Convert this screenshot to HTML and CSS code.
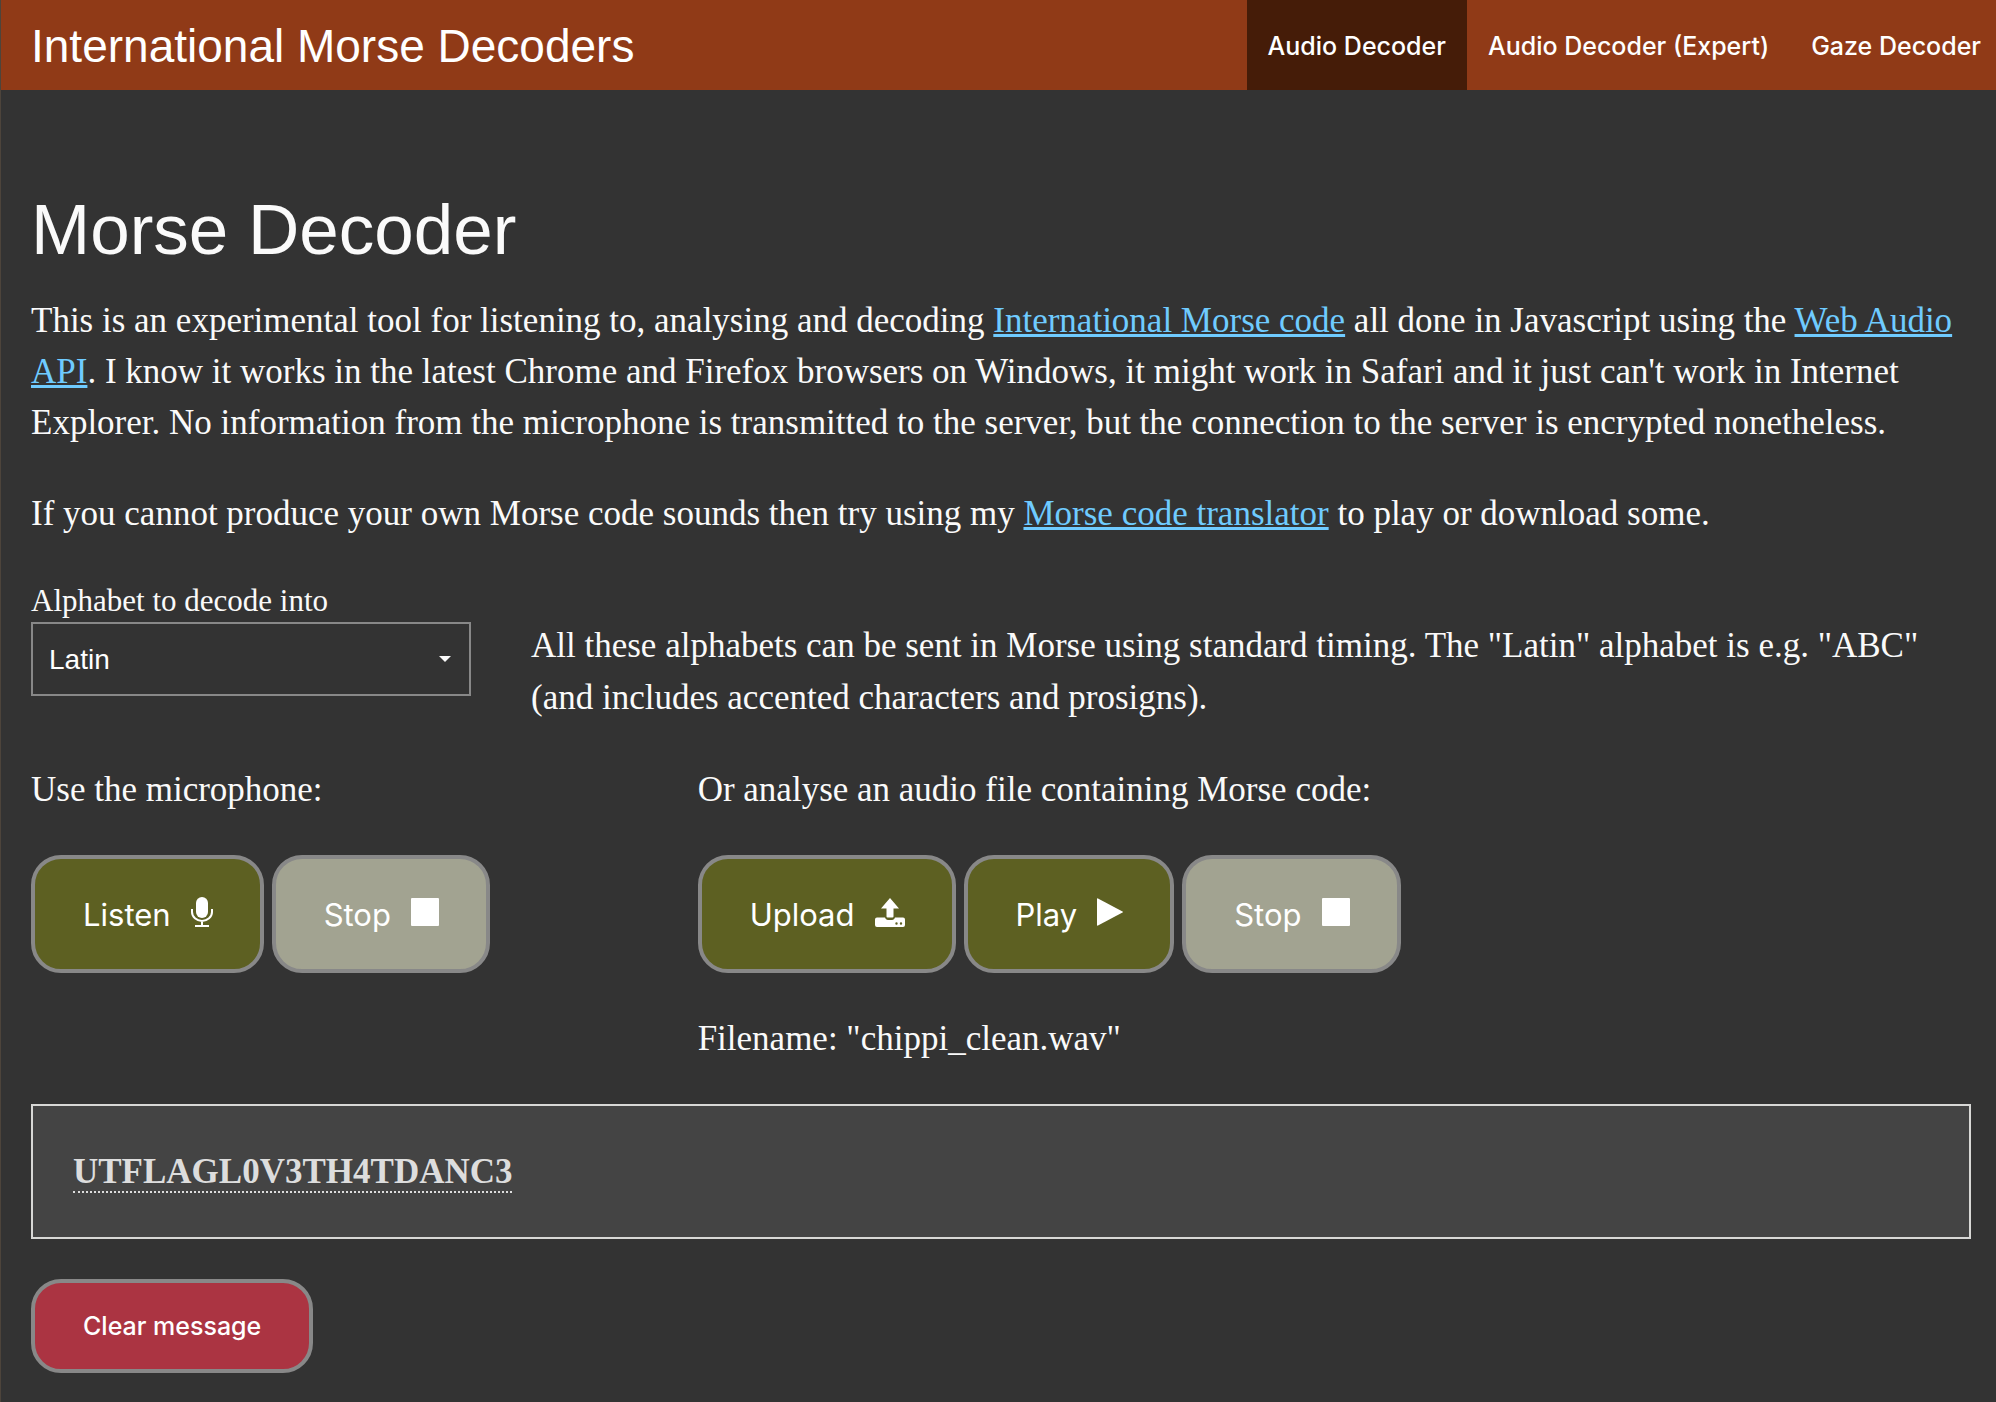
FILE: index.html
```html
<!DOCTYPE html>
<html lang="en">
<head>
  <meta charset="utf-8">
  <meta name="viewport" content="width=device-width, initial-scale=1">
  <title>Morse Decoder</title>
  <link rel="stylesheet" href="styles.css">
</head>
<body>
  <header class="topbar">
    <a class="site-title" href="#">International Morse Decoders</a>
    <nav class="site-nav">
      <a class="nav-link nav-link-active" href="#" aria-current="page">Audio Decoder</a>
      <a class="nav-link" href="#">Audio Decoder (Expert)</a>
      <a class="nav-link" href="#">Gaze Decoder</a>
    </nav>
  </header>

  <main class="content">
    <h1 class="page-title">Morse Decoder</h1>
    <p class="text">This is an experimental tool for listening to, analysing and decoding <a class="link" href="#">International Morse code</a> all done in Javascript using the <a class="link" href="#">Web Audio API</a>. I know it works in the latest Chrome and Firefox browsers on Windows, it might work in Safari and it just can't work in Internet Explorer. No information from the microphone is transmitted to the server, but the connection to the server is encrypted nonetheless.</p>
    <p class="text">If you cannot produce your own Morse code sounds then try using my <a class="link" href="#">Morse code translator</a> to play or download some.</p>

    <section class="alphabet">
      <div class="field">
        <label class="field-label" for="alphabet">Alphabet to decode into</label>
        <div class="select-wrap">
          <select class="select" id="alphabet">
            <option>Latin</option>
            <option>Cyrillic</option>
            <option>Greek</option>
          </select>
          <svg class="select-arrow" viewBox="0 0 12 6" width="12" height="6" aria-hidden="true"><path d="M0 0h12L6 6z" fill="currentColor"/></svg>
        </div>
      </div>
      <p class="text alphabet-help">All these alphabets can be sent in Morse using standard timing. The "Latin" alphabet is e.g. "ABC" (and includes accented characters and prosigns).</p>
    </section>

    <section class="sources">
      <div class="source">
        <p class="text">Use the microphone:</p>
        <div class="buttons">
          <button class="button" type="button">Listen
            <svg class="icon" viewBox="0 0 22 30" width="22" height="30" aria-hidden="true"><rect x="5" y="0" width="12" height="21" rx="6" fill="currentColor"/><path d="M1 12v3a10 9 0 0 0 20 0v-3M11 24v5M4 29h14" fill="none" stroke="currentColor" stroke-width="2"/></svg>
          </button>
          <button class="button button-off" type="button">Stop
            <svg class="icon" viewBox="0 0 28 28" width="28" height="28" aria-hidden="true"><rect width="28" height="28" rx="1" fill="currentColor"/></svg>
          </button>
        </div>
      </div>
      <div class="source source-file">
        <p class="text">Or analyse an audio file containing Morse code:</p>
        <div class="buttons">
          <button class="button" type="button">Upload
            <svg class="icon" viewBox="0 0 30 29" width="30" height="29" aria-hidden="true"><path fill="currentColor" fill-rule="evenodd" d="M15 0l9 10.500h-5.500v8a1 1 0 0 1-1 1h-5a1 1 0 0 1-1-1v-8H6zM2 19.500h8c.5 1.500 1.500 2.500 3 2.500h4c1.500 0 2.500-1 3-2.500h8a2 2 0 0 1 2 2V27a2 2 0 0 1-2 2H2a2 2 0 0 1-2-2v-5.500a2 2 0 0 1 2-2zM21.500 24.300a1.200 1.200 0 1 0 0 2.400 1.200 1.200 0 0 0 0-2.400zM26 24.300a1.200 1.200 0 1 0 0 2.400 1.200 1.200 0 0 0 0-2.400z"/></svg>
          </button>
          <button class="button" type="button">Play
            <svg class="icon" viewBox="0 0 26 28" width="26" height="28" aria-hidden="true"><path d="M0 1q0-1 1-.6l24.500 13q1 .6 0 1.200L1 27.600Q0 28 0 27z" fill="currentColor"/></svg>
          </button>
          <button class="button button-off" type="button">Stop
            <svg class="icon" viewBox="0 0 28 28" width="28" height="28" aria-hidden="true"><rect width="28" height="28" rx="1" fill="currentColor"/></svg>
          </button>
        </div>
        <p class="text">Filename: "chippi_clean.wav"</p>
      </div>
    </section>

    <div class="message"><span class="message-text">UTFLAGL0V3TH4TDANC3</span></div>
    <button class="button button-clear" type="button">Clear message</button>
  </main>
</body>
</html>
```
FILE: styles.css
```css
* {
  box-sizing: border-box;
}

body {
  min-height: 100vh;
  margin: 0;
  border-left: 1px solid #4d443b;
  background: #333;
  color: #fafafa;
  font-family: "Liberation Serif", serif;
  font-size: 35px;
  line-height: 51px;
}

.topbar {
  display: flex;
  justify-content: space-between;
  height: 90px;
  padding-left: 30px;
  background: #903a17;
  font-family: Inter, sans-serif;
  line-height: 92px;
  white-space: nowrap;
}

.site-title {
  color: #fff;
  font-family: "Liberation Sans", sans-serif;
  font-size: 46px;
  text-decoration: none;
}

.site-nav {
  display: flex;
}

.nav-link {
  padding: 0 21px;
  color: #fff;
  font-size: 25px;
  font-weight: 500;
  text-decoration: none;
}

.nav-link:last-child {
  padding-right: 15px;
}

.nav-link-active {
  background: #451c08;
}

.content {
  padding: 90px 25px 24px 30px;
}

.page-title {
  margin: 0 0 15px;
  font-family: "Liberation Sans", sans-serif;
  font-size: 71px;
  font-weight: 400;
  line-height: 100px;
}

.text {
  margin: 0 0 40px;
}

.link {
  color: #6fcbff;
  text-decoration-thickness: 3px;
  text-underline-offset: 2px;
}

.alphabet {
  display: grid;
  grid-template-columns: repeat(4, 1fr);
  column-gap: 60px;
}

.field-label {
  display: block;
  font-size: 31px;
  line-height: 43px;
}

.select-wrap {
  position: relative;
}

.select {
  display: block;
  width: 100%;
  height: 74px;
  padding: 0 16px;
  border: 2px solid #888;
  border-radius: 0;
  appearance: none;
  background: transparent;
  color: #fff;
  font-family: "Liberation Sans", sans-serif;
  font-size: 28px;
}

.select-arrow {
  position: absolute;
  top: 34px;
  right: 20px;
  pointer-events: none;
}

.alphabet-help {
  grid-column: span 3;
  padding-top: 41px;
  line-height: 52px;
}

.sources {
  display: grid;
  grid-template-columns: repeat(3, 1fr);
  column-gap: 60px;
}

.source-file {
  grid-column: span 2;
}

.buttons {
  display: flex;
  gap: 8px;
  margin-bottom: 40px;
}

.button {
  display: flex;
  align-items: center;
  gap: 20px;
  height: 118px;
  padding: 0 47px 0 48px;
  border: 4px solid #888;
  border-radius: 30px;
  background: #5d6022;
  color: #fff;
  font-family: Inter, sans-serif;
  font-size: 31px;
}

.icon {
  margin-bottom: 4px;
}

.button-off {
  background: #a2a391;
}

.button-clear {
  height: 94px;
  padding: 0 48px;
  background: #ab3442;
  font-size: 25px;
  font-weight: 500;
}

.message {
  margin-bottom: 40px;
  padding: 40px;
  border: 2px solid #d8d8d6;
  background: #444;
  color: #ddd;
  font-weight: 700;
}

.message-text {
  border-bottom: 2px dotted #ddd;
}
```
